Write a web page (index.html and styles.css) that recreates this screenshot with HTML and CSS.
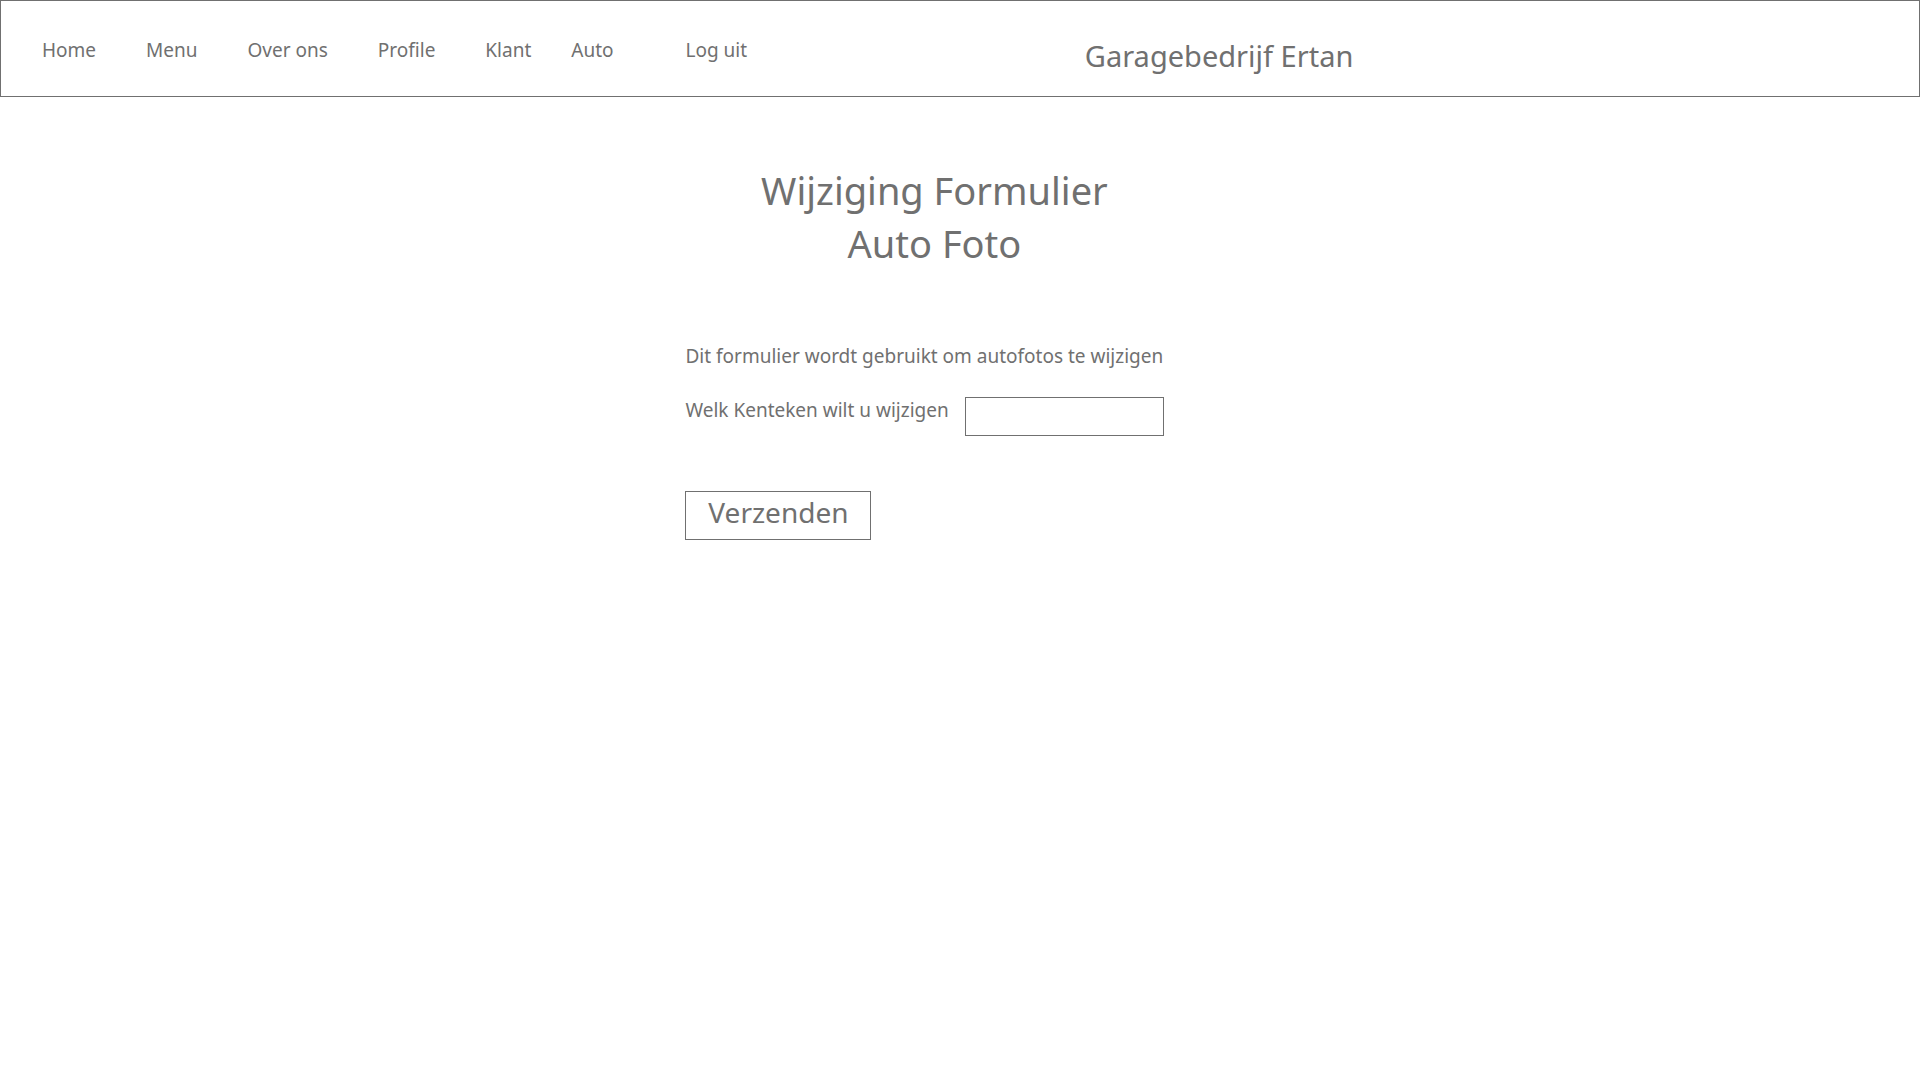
FILE: index.html
```html
<!DOCTYPE html>
<html lang="nl">
<head>
<meta charset="utf-8">
<title>Garagebedrijf Ertan</title>
<link rel="stylesheet" href="styles.css">
</head>
<body>
<header class="topbar">
  <nav class="menu">
    <a href="#">Home</a>
    <a href="#">Menu</a>
    <a href="#">Over ons</a>
    <a href="#">Profile</a>
    <a href="#">Klant</a>
    <a href="#" class="auto">Auto</a>
    <a href="#" class="logout">Log uit</a>
  </nav>
  <div class="brand">Garagebedrijf Ertan</div>
</header>
<main class="page">
  <h1 class="title">Wijziging Formulier<br>Auto Foto</h1>
  <form class="form">
    <p class="intro">Dit formulier wordt gebruikt om autofotos te wijzigen</p>
    <div class="field">
      <label for="kenteken">Welk Kenteken wilt u wijzigen</label>
      <input id="kenteken" type="text">
    </div>
    <button type="submit" class="send">Verzenden</button>
  </form>
</main>
</body>
</html>
```
FILE: styles.css
```css
* { box-sizing: border-box; }
body {
  margin: 0;
  background: #fff;
  color: #707070;
  font-family: "Noto Sans", "Open Sans", sans-serif;
  font-size: 19px;
  line-height: 26px;
}
.topbar {
  display: flex;
  align-items: center;
  min-height: 97px;
  padding: 3px 41px 0;
  border: 1px solid #707070;
}
.menu {
  display: flex;
  flex: 0 0 56.8%;
  gap: 50px;
}
.menu a { color: inherit; text-decoration: none; white-space: nowrap; }
.menu .auto { margin-left: -10px; }
.menu .logout { margin-left: 22px; }
.brand { padding-top: 12px; font-size: 29px; line-height: 40px; white-space: nowrap; }
.page { margin-left: 35.7%; }
.title {
  width: 498px;
  margin: 67px 0 0;
  font-size: 38px;
  font-weight: 400;
  line-height: 53px;
  text-align: center;
}
.intro { margin: 73px 0 0; }
.field { display: flex; gap: 16px; margin-top: 28px; }
.field input {
  width: 199px;
  height: 39px;
  padding: 0 8px;
  border: 1px solid #707070;
  background: #fff;
  font: inherit;
  color: inherit;
}
.send {
  width: 186px;
  height: 49px;
  margin-top: 55px;
  padding: 0 0 8px;
  border: 1px solid #707070;
  background: #fff;
  color: inherit;
  font-family: inherit;
  font-size: 28px;
  line-height: 40px;
}
```
